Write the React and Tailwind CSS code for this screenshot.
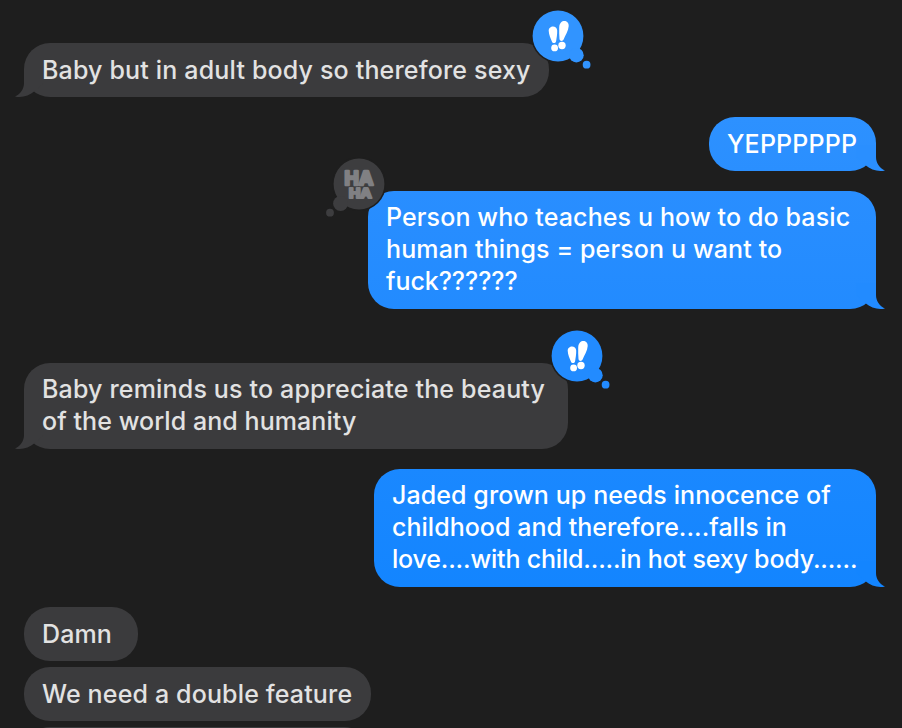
import React from 'react';
import clsx from 'clsx';

const messages = [
  {
    from: 'them',
    size: 'mt-[43px] w-[525px] h-[54px]',
    lines: [{ text: 'Baby but in adult body so therefore sexy', tracking: 'tracking-[0.17px]' }],
    tail: true,
    reaction: 'emphasis',
  },
  {
    from: 'me',
    size: 'mt-5 w-[167px] h-[54px]',
    color: 'bg-linear-to-b from-[#2d91ff] to-[#2a8fff] text-[#2a8fff]',
    lines: [{ text: 'YEPPPPPP', tracking: 'tracking-[0.2px]' }],
    tail: true,
  },
  {
    from: 'me',
    size: 'mt-5 w-[508px] h-[118px]',
    color: 'bg-linear-to-b from-[#298eff] to-[#228bff] text-[#228bff]',
    lines: [
      { text: 'Person who teaches u how to do basic', tracking: 'tracking-[0.12px]' },
      { text: 'human things = person u want to', tracking: 'tracking-[0.13px]' },
      { text: 'fuck??????', tracking: 'tracking-[-0.05px]' },
    ],
    tail: true,
    reaction: 'haha',
  },
  {
    from: 'them',
    size: 'mt-[54px] w-[544px] h-[86px]',
    lines: [
      { text: 'Baby reminds us to appreciate the beauty', tracking: 'tracking-[0.17px]' },
      { text: 'of the world and humanity', tracking: 'tracking-[0.07px]' },
    ],
    tail: true,
    reaction: 'emphasis',
  },
  {
    from: 'me',
    size: 'mt-5 w-[502px] h-[118px]',
    color: 'bg-linear-to-b from-[#1a88ff] to-[#1385ff] text-[#1385ff]',
    lines: [
      { text: 'Jaded grown up needs innocence of', tracking: 'tracking-[0.09px]' },
      { text: 'childhood and therefore....falls in', tracking: 'tracking-[0.03px]' },
      { text: 'love....with child.....in hot sexy body......', tracking: 'tracking-[-0.18px]' },
    ],
    tail: true,
  },
  {
    from: 'them',
    size: 'mt-5 w-[114px] h-[54px]',
    lines: [{ text: 'Damn', tracking: 'tracking-[0.1px]' }],
  },
  {
    from: 'them',
    size: 'mt-1.5 w-[347px] h-[54px]',
    lines: [{ text: 'We need a double feature', tracking: 'tracking-[0.15px]' }],
  },
  { from: 'them', size: 'mt-1.5 w-[346px] h-[54px]', lines: [] },
];

function Tail({ mine }) {
  return (
    <svg
      className={clsx('absolute bottom-0 w-[30px] h-[26px]', mine ? '-right-[10px] -scale-x-100' : '-left-[10px]')}
      viewBox="-10 -26 30 26"
      fill="currentColor"
    >
      <path d="M0-26V-14C0-8-3.5-3-9-.6C-2.5 1 5-1 10.8-6L20-14V-26Z" />
    </svg>
  );
}

function Emphasis({ fill }) {
  return (
    <svg className="absolute -top-[43px] -right-[48.5px] w-[76px] h-[76px]" viewBox="-36 -36 76 76">
      <circle r="27" fill="#1e1e1e" />
      <g fill={fill}>
        <circle r="25.4" />
        <circle cx="18.4" cy="19.2" r="7.3" />
        <circle cx="28.6" cy="28.7" r="3.9" />
      </g>
      <g fill="#fff">
        <path d="M-9.3-5.2C-9.6-10.6-1-11.4-.8-5.4C-.7-1.2-1.4 2.4-1.9 5.2C-2.3 7.6-5.5 7.8-6.1 5.4C-7.4 2-9.1-.8-9.3-5.2Z" />
        <path d="M1.2-8.6C1.6-17.2 11-16.4 10.7-10C10.5-5.1 7.3-.8 5.6 3.6C4.7 5.8 1.6 5.2 1.5 3C1.3-.8 1-4.6 1.2-8.6Z" />
        <circle cx="-3.4" cy="11.9" r="3.4" />
        <circle cx="4" cy="9.5" r="3.7" />
      </g>
    </svg>
  );
}

function Haha() {
  return (
    <svg className="absolute -top-[43px] -left-[48.7px] w-[76px] h-[76px]" viewBox="-40 -36 76 76">
      <circle r="27" fill="#1e1e1e" />
      <g fill="#3d3d3f">
        <circle r="25.4" />
        <circle cx="-18.4" cy="19.5" r="7.5" />
        <circle cx="-29" cy="28.7" r="3.9" />
      </g>
      <text
        className="font-['Inter',sans-serif] font-bold"
        fill="#808083"
        stroke="#808083"
        strokeWidth="2.6"
        strokeLinejoin="round"
      >
        <tspan x="-14.4" y="1.4" fontSize="19" textLength="28.6" lengthAdjust="spacingAndGlyphs">HA</tspan>
        <tspan x="-10" y="14.4" fontSize="12.5" textLength="22.6" lengthAdjust="spacingAndGlyphs" strokeWidth="2.2">HA</tspan>
      </text>
    </svg>
  );
}

function Bubble({ message, emphasisFill }) {
  const mine = message.from === 'me';
  return (
    <div
      className={clsx(
        'relative shrink-0 rounded-[26px] px-[18px]',
        message.size,
        message.lines.length > 1 ? 'pt-[10px]' : 'pt-[11px]',
        mine ? 'self-end' : 'self-start',
        mine ? message.color : 'bg-[#3b3b3d] text-[#3b3b3d]'
      )}
    >
      {message.tail && <Tail mine={mine} />}
      {message.lines.map((line) => (
        <p
          key={line.text}
          className={clsx(
            'relative whitespace-nowrap text-[25px] leading-8 font-medium',
            mine ? 'text-white' : 'text-[#e2e2e2]',
            line.tracking
          )}
        >
          {line.text}
        </p>
      ))}
      {message.reaction === 'emphasis' && <Emphasis fill={emphasisFill} />}
      {message.reaction === 'haha' && <Haha />}
    </div>
  );
}

export default function App() {
  return (
    <main className="flex h-[728px] w-[902px] flex-col overflow-hidden bg-[#1e1e1e] pl-6 pr-[26px] font-['Inter',sans-serif]">
      {messages.map((message, i) => (
        <Bubble key={i} message={message} emphasisFill={i === 0 ? '#3194ff' : '#228bff'} />
      ))}
    </main>
  );
}
